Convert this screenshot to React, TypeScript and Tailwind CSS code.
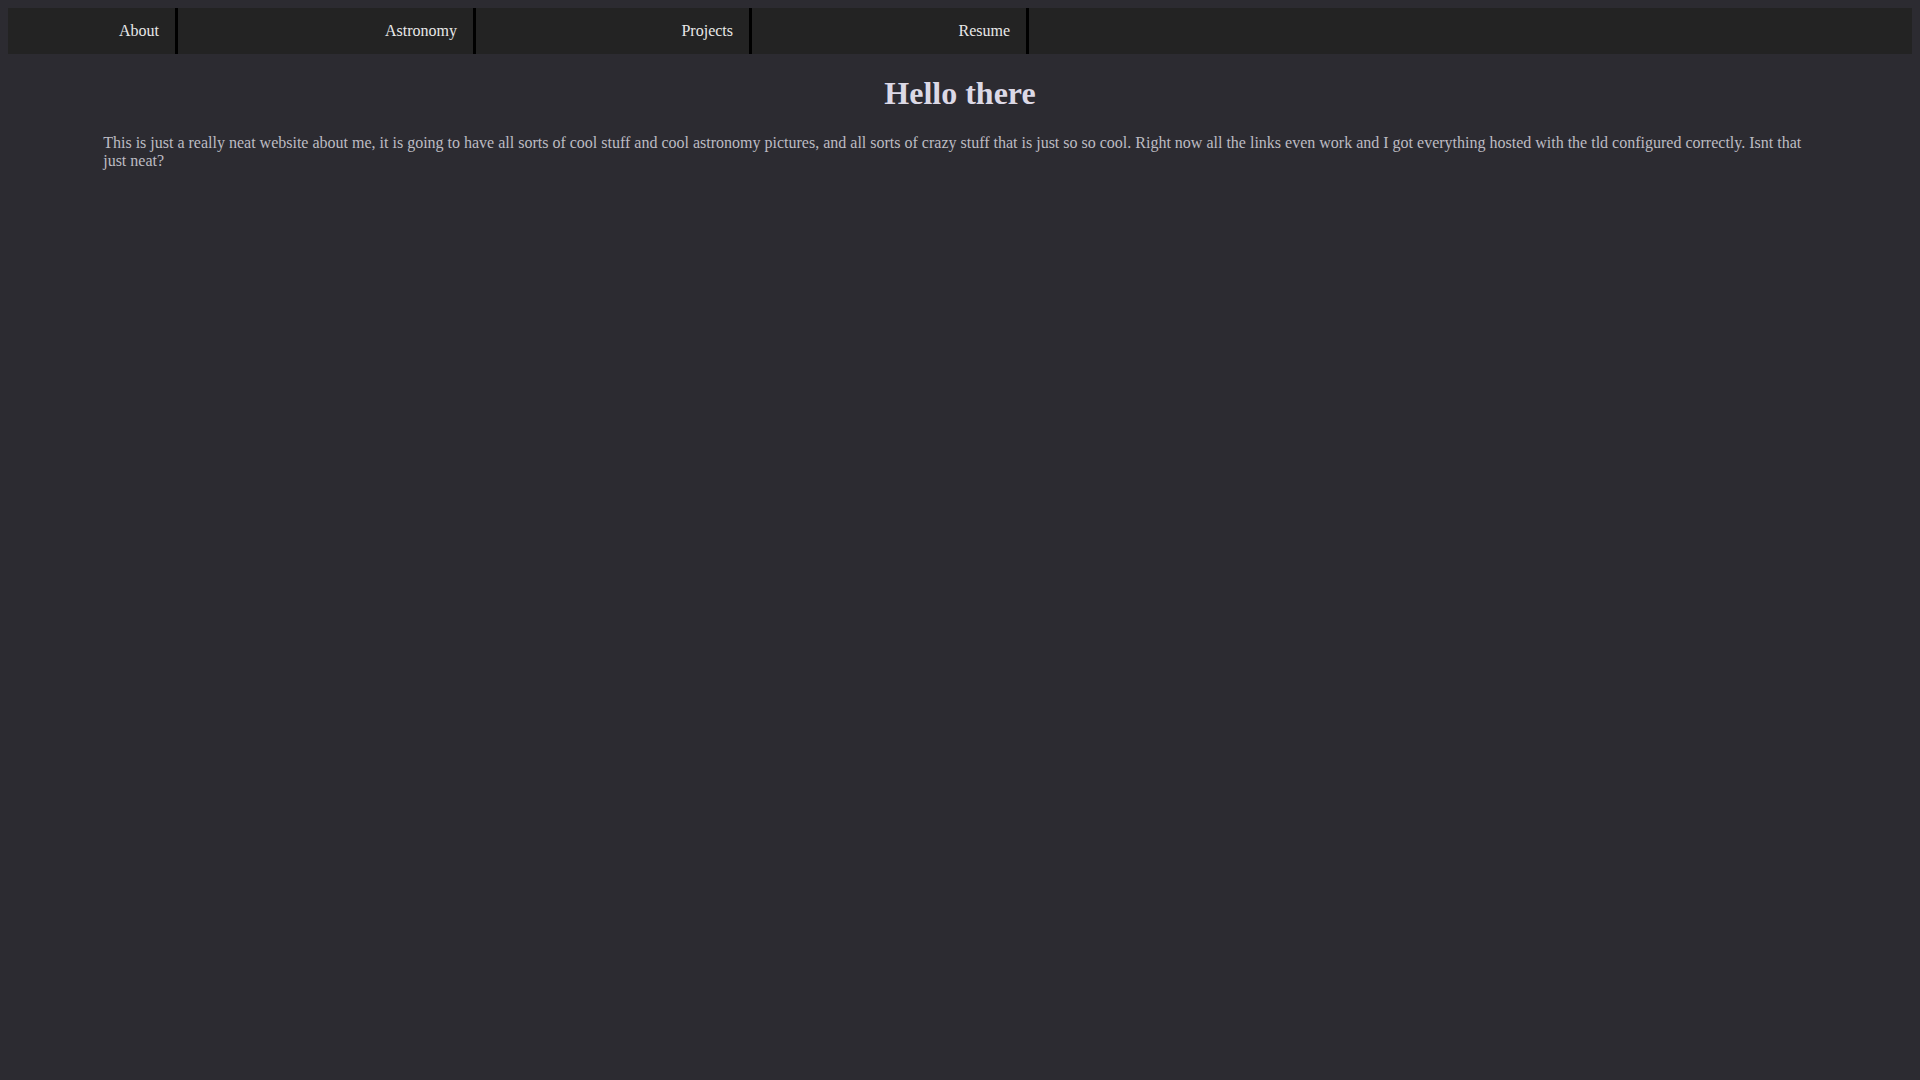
export default function App() {
  const links = [
    { label: "About", w: "w-[170px]" },
    { label: "Astronomy", w: "w-[298px]" },
    { label: "Projects", w: "w-[276px]" },
    { label: "Resume", w: "w-[277px]" },
  ];

  return (
    <div className="min-h-screen bg-[#2c2b31] p-2 font-['Liberation_Serif',serif]">
      <nav className="flex h-[46px] bg-[#232323]">
        {links.map((l) => (
          <a
            key={l.label}
            href="#"
            className={`${l.w} flex items-center justify-end pr-4 border-r-[3px] border-black text-base text-[#e8e8e8]`}
          >
            {l.label}
          </a>
        ))}
      </nav>

      <h1 className="my-[21.44px] text-center text-[32px] font-bold leading-[normal] text-[#dcd9e6]">
        Hello there
      </h1>

      <p className="mx-[5%] my-4 text-base leading-[normal] text-[#bdbcc3]">
        This is just a really neat website about me, it is going to have all sorts of cool stuff and cool astronomy
        pictures, and all sorts of crazy stuff that is just so so cool. Right now all the links even work and I got
        everything hosted with the tld configured correctly. Isnt that just neat?
      </p>
    </div>
  );
}
